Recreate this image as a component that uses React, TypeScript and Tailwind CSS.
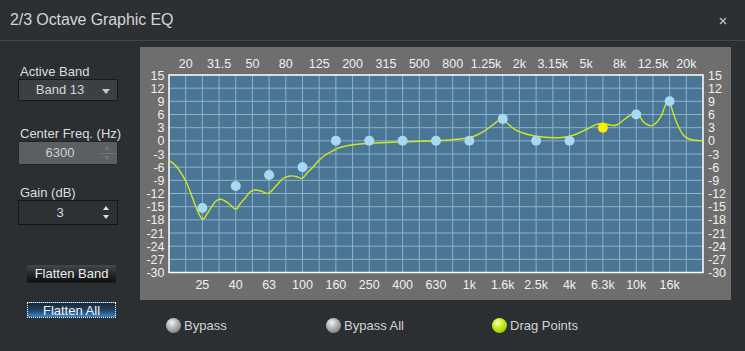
import React from "react";

const topLabels = ["20", "31.5", "50", "80", "125", "200", "315", "500", "800", "1.25k", "2k", "3.15k", "5k", "8k", "12.5k", "20k"];
const bottomLabels = ["25", "40", "63", "100", "160", "250", "400", "630", "1k", "1.6k", "2.5k", "4k", "6.3k", "10k", "16k"];
const gains = [-15.3, -10.3, -7.8, -6, 0, 0, 0, 0, 0, 5, 0, 0, 3, 6, 9];

const PX = 169;
const PY = 75;
const PW = 534;
const PH = 197.5;
const COL = PW / 32;
const ROW = PH / 15;

const curvePts: [number, number][] = [
  [169, 160.5], [176, 166], [183.3, 176.7], [188, 186], [193.3, 200], [198, 212], [202.7, 219.3], [207, 214], [211.7, 206.7],
  [216, 201], [221, 199.3], [228, 203], [235.7, 209.3], [240, 204], [245, 198.3], [250, 192], [255, 190],
  [261, 191], [268.3, 193.3], [276, 186], [283.3, 178.3], [290, 176], [296, 176.5], [302.3, 178.3],
  [307, 173], [313.3, 166.7], [320, 159.3], [327, 154], [333.3, 150.7], [340, 147.5], [355, 144.5], [370, 143.3],
  [403.3, 141.7], [436.7, 140.7], [455, 139.5], [468.3, 137.7], [476, 135.5], [483.3, 131.7], [492, 125.5], [501.7, 119],
  [508, 124], [516.7, 130.7], [527, 134.3], [540, 136.7], [556.7, 137.7], [566, 137], [576.7, 134], [587, 129],
  [596.7, 124.3], [603.3, 123.5], [610, 125], [616.7, 125], [625, 119], [635, 112.7], [639, 115.5], [643.3, 121.7], [648, 125], [652.7, 125.3],
  [657, 122], [661.7, 115], [665, 106], [668.3, 101.7], [671, 106], [675, 118.3], [679, 127.5], [683.3, 135], [688, 138.5],
  [693.3, 140], [702.7, 140.7],
];

function smoothPath(pts: [number, number][]) {
  let d = `M${pts[0][0]},${pts[0][1]}`;
  for (let i = 0; i < pts.length - 1; i++) {
    const p0 = pts[i - 1] || pts[i];
    const p1 = pts[i];
    const p2 = pts[i + 1];
    const p3 = pts[i + 2] || p2;
    const c1x = p1[0] + (p2[0] - p0[0]) / 6;
    const c1y = p1[1] + (p2[1] - p0[1]) / 6;
    const c2x = p2[0] - (p3[0] - p1[0]) / 6;
    const c2y = p2[1] - (p3[1] - p1[1]) / 6;
    d += ` C${c1x.toFixed(2)},${c1y.toFixed(2)} ${c2x.toFixed(2)},${c2y.toFixed(2)} ${p2[0]},${p2[1]}`;
  }
  return d;
}

const yLabels = Array.from({ length: 16 }, (_, j) => 15 - 3 * j);

function Chart() {
  const bandX = (i: number) => PX + COL * (i + 1);
  const gainY = (g: number) => PY + ((15 - g) / 45) * PH;
  return (
    <svg width={591} height={253} viewBox="140 47 591 253" className="block">
      <rect x={PX} y={PY} width={PW} height={PH} fill="#4a7696" />
      {Array.from({ length: 31 }, (_, k) => (
        <line key={"v" + k} x1={PX + COL * (k + 1)} x2={PX + COL * (k + 1)} y1={PY} y2={PY + PH} stroke="#8db1c9" strokeWidth={1} />
      ))}
      {Array.from({ length: 14 }, (_, j) => (
        <line key={"h" + j} x1={PX} x2={PX + PW} y1={PY + ROW * (j + 1)} y2={PY + ROW * (j + 1)} stroke="#8db1c9" strokeWidth={1} />
      ))}
      <rect x={PX} y={PY} width={PW} height={PH} fill="none" stroke="#ffffff" strokeWidth={1.5} />
      <path d={smoothPath(curvePts)} fill="none" stroke="#d2e81e" strokeWidth={1.4} />
      {gains.map((g, i) => (
        <circle key={"d" + i} cx={bandX(2 * i + 1)} cy={gainY(g)} r={5} fill={i === 12 ? "#f4f000" : "#a6daf2"} />
      ))}
      <g fill="#f0f0f0" fontFamily="'Liberation Sans', Arial, sans-serif" fontSize={12.5}>
        {topLabels.map((t, i) => (
          <text key={"t" + t} x={bandX(2 * i)} y={64} textAnchor="middle" dominantBaseline="central">{t}</text>
        ))}
        {bottomLabels.map((t, i) => (
          <text key={"b" + t} x={bandX(2 * i + 1)} y={285} textAnchor="middle" dominantBaseline="central">{t}</text>
        ))}
        {yLabels.map((v, j) => (
          <text key={"l" + v} x={164.5} y={PY + ROW * j + 0.5} textAnchor="end" dominantBaseline="central" fontSize={12.5}>{v}</text>
        ))}
        {yLabels.map((v, j) => (
          <text key={"r" + v} x={708} y={PY + ROW * j + 0.5} textAnchor="start" dominantBaseline="central" fontSize={12.5}>{v}</text>
        ))}
      </g>
    </svg>
  );
}

function Led({ color }: { color: "gray" | "green" }) {
  const bg =
    color === "gray"
      ? "bg-[radial-gradient(circle_at_38%_32%,#f2f2f2_0%,#b4b4b4_40%,#7a7a7a_85%,#5a5a5a_100%)]"
      : "bg-[radial-gradient(circle_at_38%_32%,#f6ffb0_0%,#c6ee1c_40%,#94c00a_85%,#6a8a00_100%)]";
  return <span className={`inline-block shrink-0 w-[15px] h-[15px] rounded-full ${bg}`} />;
}

export default function App() {
  const font = { fontFamily: "'Liberation Sans', Arial, sans-serif" };
  return (
    <div className="w-[745px] h-[351px] bg-[#2b2f32] flex flex-col overflow-hidden text-[#dcdcdc]" style={font}>
      <div className="h-[41px] shrink-0 flex items-center justify-between pl-[10px] pr-[18px] border-b border-[#43474a] bg-[#2c3033]">
        <span className="text-[16px] text-[#d4d4d4] leading-none tracking-[-0.1px]">2/3 Octave Graphic EQ</span>
        <svg width="8" height="8" viewBox="0 0 8 8" className="mt-[1px]">
          <path d="M1 1L7 7M7 1L1 7" stroke="#c4c4c4" strokeWidth="1.3" />
        </svg>
      </div>
      <div className="flex flex-1">
        <div className="w-[140px] shrink-0 flex flex-col text-[13px]">
          <div className="ml-[20px] mt-[24px] h-[14px] leading-[14px] text-[#dedede]">Active Band</div>
          <div className="ml-[18px] w-[100px] h-[22px] bg-[#3b4043] border border-[#17191b] flex items-center relative">
            <span className="w-[82px] text-center text-[#d6d6d6]">Band 13</span>
            <svg width="8" height="5" viewBox="0 0 8 5" className="absolute right-[7px] top-[9px]">
              <path d="M0 0H8L4 5Z" fill="#c8c8c8" />
            </svg>
          </div>
          <div className="ml-[20px] mt-[26px] h-[14px] leading-[14px] text-[#dedede]">Center Freq. (Hz)</div>
          <div className="ml-[18px] w-[100px] h-[24px] bg-[#5b5f61] border border-[#222527] flex items-center relative">
            <span className="w-[82px] text-center text-[#cfd0d0]">6300</span>
            <div className="absolute right-0 top-[11px] w-[18px] h-px bg-[#6f7375]" />
            <svg width="6" height="4" viewBox="0 0 6 4" className="absolute right-[7px] top-[4px]">
              <path d="M0 4H6L3 0Z" fill="#6e7274" />
            </svg>
            <svg width="6" height="4" viewBox="0 0 6 4" className="absolute right-[7px] bottom-[4px]">
              <path d="M0 0H6L3 4Z" fill="#6e7274" />
            </svg>
          </div>
          <div className="ml-[20px] mt-[21px] h-[14px] leading-[14px] text-[#dedede]">Gain (dB)</div>
          <div className="ml-[18px] w-[100px] h-[25px] bg-[#2d3134] border border-[#141617] flex items-center relative">
            <span className="w-[82px] text-center text-[#d8d8d8]">3</span>
            <svg width="6" height="4" viewBox="0 0 6 4" className="absolute right-[8px] top-[5px]">
              <path d="M0 4H6L3 0Z" fill="#e0e0e0" />
            </svg>
            <svg width="6" height="4" viewBox="0 0 6 4" className="absolute right-[8px] bottom-[5px]">
              <path d="M0 0H6L3 4Z" fill="#e0e0e0" />
            </svg>
          </div>
          <button className="ml-[27px] mt-[40px] w-[89px] h-[17px] rounded-[2px] bg-gradient-to-b from-[#45494c] via-[#26292b] to-[#0e0f10] text-[#ececec] text-[13px] leading-none flex items-center justify-center shadow-[0_1px_0_#1a1c1d]">
            Flatten Band
          </button>
          <button className="ml-[27px] mt-[20px] w-[89px] h-[16px] bg-gradient-to-b from-[#1c2632] via-[#1f4062] to-[#3a8ad0] text-[#eef4fa] text-[13px] leading-none flex items-center justify-center border border-dotted border-white">
            Flatten All
          </button>
        </div>
        <div className="flex flex-col">
          <div className="mt-[6px] w-[591px] h-[253px] bg-[#6e6e6e]">
            <Chart />
          </div>
          <div className="flex items-center h-[51px] pl-[26px] text-[13px] text-[#d2d2d2]">
            <div className="w-[160px] flex items-center gap-[3px]"><Led color="gray" /><span>Bypass</span></div>
            <div className="w-[166px] flex items-center gap-[3px]"><Led color="gray" /><span>Bypass All</span></div>
            <div className="flex items-center gap-[3px]"><Led color="green" /><span>Drag Points</span></div>
          </div>
        </div>
      </div>
    </div>
  );
}
